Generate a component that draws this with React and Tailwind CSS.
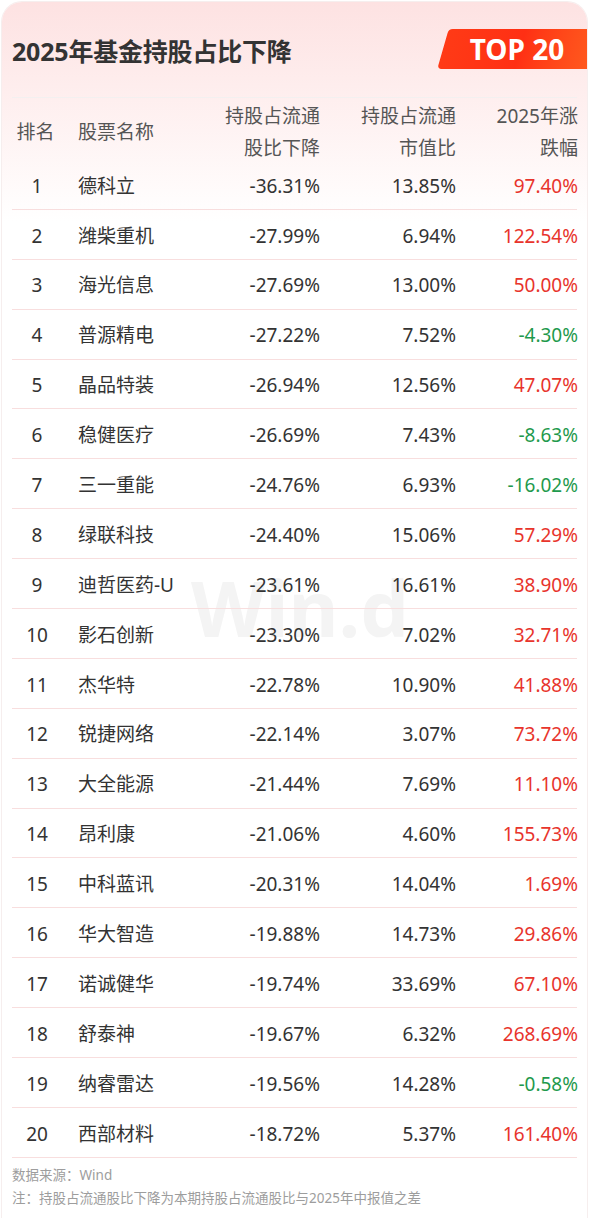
const ROWS = [
  ["1", "德科立", "-36.31%", "13.85%", "97.40%"],
  ["2", "潍柴重机", "-27.99%", "6.94%", "122.54%"],
  ["3", "海光信息", "-27.69%", "13.00%", "50.00%"],
  ["4", "普源精电", "-27.22%", "7.52%", "-4.30%"],
  ["5", "晶品特装", "-26.94%", "12.56%", "47.07%"],
  ["6", "稳健医疗", "-26.69%", "7.43%", "-8.63%"],
  ["7", "三一重能", "-24.76%", "6.93%", "-16.02%"],
  ["8", "绿联科技", "-24.40%", "15.06%", "57.29%"],
  ["9", "迪哲医药-U", "-23.61%", "16.61%", "38.90%"],
  ["10", "影石创新", "-23.30%", "7.02%", "32.71%"],
  ["11", "杰华特", "-22.78%", "10.90%", "41.88%"],
  ["12", "锐捷网络", "-22.14%", "3.07%", "73.72%"],
  ["13", "大全能源", "-21.44%", "7.69%", "11.10%"],
  ["14", "昂利康", "-21.06%", "4.60%", "155.73%"],
  ["15", "中科蓝讯", "-20.31%", "14.04%", "1.69%"],
  ["16", "华大智造", "-19.88%", "14.73%", "29.86%"],
  ["17", "诺诚健华", "-19.74%", "33.69%", "67.10%"],
  ["18", "舒泰神", "-19.67%", "6.32%", "268.69%"],
  ["19", "纳睿雷达", "-19.56%", "14.28%", "-0.58%"],
  ["20", "西部材料", "-18.72%", "5.37%", "161.40%"],
];

const COLS = "grid grid-cols-[50px_128px_130px_136px_122px]";

export default function App() {
  return (
    <div
      className="bg-white w-[589px] min-h-[1218px] pt-[2px] px-[2px]"
      style={{ fontFamily: '"Noto Sans", "Noto Sans CJK SC", sans-serif' }}
    >
      <div className="relative overflow-hidden rounded-t-[20px] bg-gradient-to-b from-[#fde2e2] via-white via-[18%] to-white shadow-[0_0_0_1px_#f6eeee]">
        {/* title */}
        <div className="flex items-center justify-between h-[95px] pl-[10px]">
          <div className="text-[25px] font-bold text-[#333] tracking-[-0.2px] pt-[4px]">
            2025年基金持股占比下降
          </div>
          <div className="relative w-[150px] h-[40px] mb-[2px] flex items-center justify-center">
            <div className="absolute inset-y-0 left-[6px] -right-[10px] -skew-x-[16deg] rounded-[4px] bg-gradient-to-r from-[#ff3a16] via-[#ff2f14] to-[#ff5a1e]" />
            <span className="relative text-white font-bold text-[28px] leading-none pl-[10px]">TOP 20</span>
          </div>
        </div>

        <div className="relative px-[10px]">
          <div className="absolute left-[189px] top-[472px] text-[77px] font-bold text-[#f4f4f4] leading-none select-none">
            Win.d
          </div>

          {/* header */}
          <div className={`${COLS} relative border-t border-[#f3f0f0] pt-[2px] h-[63px] text-[19px] leading-[32px] text-[#555]`}>
            <div className="flex items-center justify-center pr-[3px]">排名</div>
            <div className="flex items-center pl-[16px]">股票名称</div>
            <div className="text-right">持股占流通<br />股比下降</div>
            <div className="text-right">持股占流通<br />市值比</div>
            <div className="text-right">2025年涨<br />跌幅</div>
          </div>

          {/* rows */}
          {ROWS.map(([rank, name, a, b, c]) => (
            <div
              key={rank}
              className={`${COLS} relative h-[49.9px] items-center pt-[3px] border-b border-[#f8dede] text-[19px] text-[#333]`}
            >
              <div className="text-center">{rank}</div>
              <div className="pl-[16px]">{name}</div>
              <div className="text-right">{a}</div>
              <div className="text-right">{b}</div>
              <div className={`text-right ${c.startsWith("-") ? "text-[#1f9a4d]" : "text-[#e8342c]"}`}>{c}</div>
            </div>
          ))}

          {/* footer */}
          <div className="pt-[6px] pb-[8px] text-[13.5px] leading-[23px] text-[#9d9d9d]">
            <div>数据来源：Wind</div>
            <div>注：持股占流通股比下降为本期持股占流通股比与2025年中报值之差</div>
          </div>
        </div>
      </div>
    </div>
  );
}
